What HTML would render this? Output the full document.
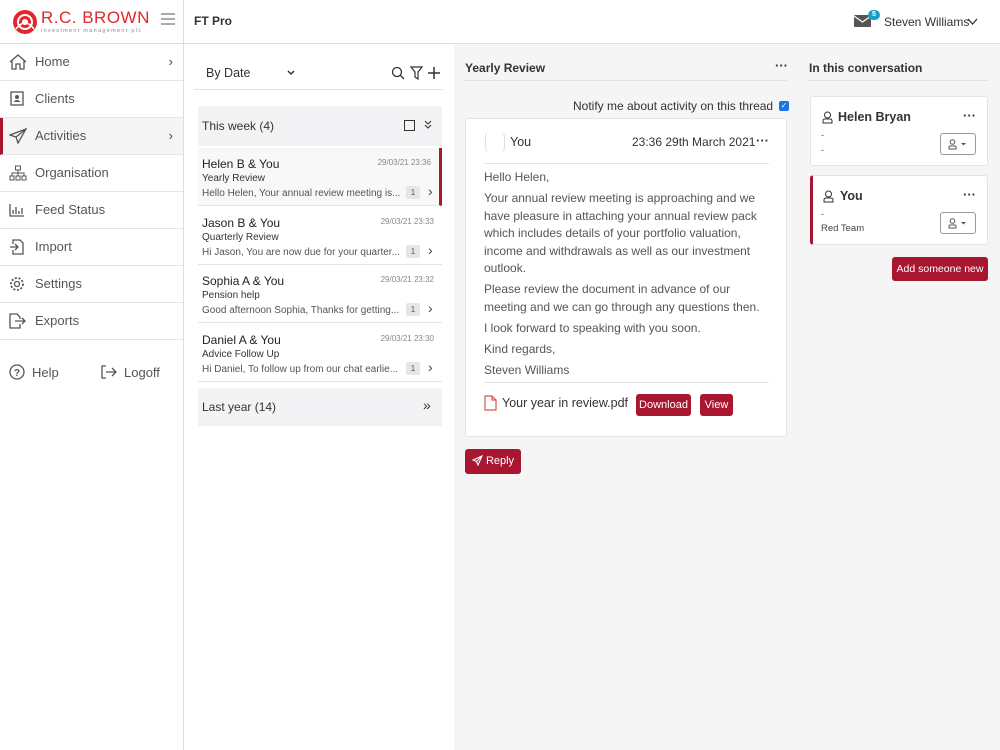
<!DOCTYPE html>
<html><head><style>
*{box-sizing:border-box;margin:0;padding:0}
body{width:1000px;height:750px;overflow:hidden;font-family:"Liberation Sans",sans-serif;color:#333;background:#fff;position:relative;font-size:13px}
.abs{position:absolute}
.hdr{left:0;top:0;width:1000px;height:44px;border-bottom:1px solid #ddd;background:#fff}
.side{left:0;top:44px;width:184px;height:706px;border-right:1px solid #ddd;background:#fff}
.nav{position:absolute;left:0;width:183px;height:37px;border-bottom:1px solid #e5e5e5;font-size:13px;color:#555;line-height:36px;padding-left:35px}
.nav svg{position:absolute;left:9px;top:10px}
.chev{position:absolute;right:10px;top:0;font-size:13px;color:#444}
.right{left:454px;top:44px;width:546px;height:706px;background:#f5f5f5}
.item{position:absolute;left:198px;width:244px;background:#fff;border-bottom:1px solid #e5e5e5}
.item b{position:absolute;left:4px;top:9px;font-size:12px;font-weight:normal;color:#222}
.item .d{position:absolute;right:8px;top:10px;font-size:8px;color:#888}
.item .s{position:absolute;left:4px;top:25px;font-size:10px;color:#333}
.item .p{position:absolute;left:4px;top:40px;font-size:10px;color:#555}
.item .n{position:absolute;left:208px;top:38px;width:14px;height:13px;background:#e4e6ea;border-radius:2px;font-size:8px;text-align:center;line-height:13px;color:#555}
.item .a{position:absolute;left:230px;top:35px;font-size:14px;color:#444}
.btn{position:absolute;background:#a8162f;color:#fff;border-radius:3px;font-size:11px;text-align:center}
.card{position:absolute;background:#fff;border:1px solid #e4e4e4;border-radius:3px}
.body p{font-size:12px;color:#555;line-height:17.5px;margin-bottom:3.5px}
.dots{position:absolute;font-size:13px;font-weight:bold;color:#333}
.pbtn{position:absolute;width:36px;height:22px;border:1px solid #999;border-radius:3px;background:#fff}
</style></head><body>
<div class="abs hdr">
  <svg class="abs" style="left:12px;top:9px" width="26" height="26" viewBox="0 0 26 26"><circle cx="13" cy="13" r="12" fill="#e3262b"/><circle cx="13" cy="13" r="7" fill="none" stroke="#fff" stroke-width="2"/><circle cx="13" cy="13" r="3" fill="#fff"/><path d="M4 20 Q13 8 22 20" stroke="#fff" stroke-width="1.5" fill="none"/></svg>
  <div class="abs" style="left:41px;top:8px;font-size:17px;color:#e3262b;letter-spacing:0.5px">R.C. BROWN</div>
  <div class="abs" style="left:41px;top:28px;font-size:5.5px;color:#888;letter-spacing:1.3px">investment management plc</div>
  <div class="abs" style="left:161px;top:13px;width:14px;height:2px;background:#aaa;box-shadow:0 5px 0 #aaa,0 10px 0 #aaa"></div>
  <div class="abs" style="left:183px;top:0;width:1px;height:44px;background:#ddd"></div>
  <div class="abs" style="left:194px;top:14px;font-size:12px;font-weight:bold;color:#333">FT Pro</div>
  <svg class="abs" style="left:854px;top:15px" width="17" height="12" viewBox="0 0 17 12"><rect width="17" height="12" rx="1" fill="#555"/><path d="M0 1 L8.5 7 L17 1" stroke="#fff" stroke-width="1.2" fill="none"/></svg>
  <div class="abs" style="left:868px;top:10px;width:12px;height:10px;border-radius:5px;background:#1ba0c4;color:#fff;font-size:7px;text-align:center;line-height:10px;font-weight:bold">5</div>
  <div class="abs" style="left:884px;top:15px;font-size:12px;color:#333">Steven Williams</div>
  <svg class="abs" style="left:967px;top:18px" width="11" height="7"><path d="M1 1 L5.5 6 L10 1" stroke="#333" stroke-width="1.3" fill="none"/></svg>
</div>
<div class="abs side">
  <div class="nav" style="top:0">Home<span class="chev">›</span><svg width="18" height="16" viewBox="0 0 18 16"><path d="M1 8 L9 1 L17 8 M3 6 V15 H7 V10 H11 V15 H15 V6" stroke="#555" stroke-width="1.3" fill="none"/></svg></div>
  <div class="nav" style="top:37px">Clients<svg width="16" height="16" viewBox="0 0 16 16"><rect x="2" y="1" width="12" height="13" stroke="#555" stroke-width="1.3" fill="none"/><circle cx="8" cy="6" r="2" fill="#555"/><path d="M4.5 11 Q8 7 11.5 11Z" fill="#555"/></svg></div>
  <div class="nav" style="top:74px;background:#f5f5f5;border-left:3px solid #a8162f;padding-left:32px">Activities<span class="chev">›</span><svg style="left:6px" width="18" height="16" viewBox="0 0 18 16"><path d="M17 1 L1 7 L7 9 L9 15 Z M7 9 L17 1" stroke="#555" stroke-width="1.3" fill="none"/></svg></div>
  <div class="nav" style="top:111px">Organisation<svg width="18" height="16" viewBox="0 0 18 16"><rect x="6.5" y="1" width="5" height="4" stroke="#555" fill="none"/><path d="M9 5V8 M3 11V8H15V11 M9 8V11" stroke="#555" fill="none"/><rect x="1" y="11" width="4" height="4" stroke="#555" fill="none"/><rect x="7" y="11" width="4" height="4" stroke="#555" fill="none"/><rect x="13" y="11" width="4" height="4" stroke="#555" fill="none"/></svg></div>
  <div class="nav" style="top:148px">Feed Status<svg width="16" height="16" viewBox="0 0 16 16"><path d="M1 2V14H15 M4 12V8 M7 12V5 M10 12V9 M13 12V6" stroke="#555" stroke-width="1.3" fill="none"/></svg></div>
  <div class="nav" style="top:185px">Import<svg width="16" height="16" viewBox="0 0 16 16"><path d="M4 5V1H11L14 4V15H4V11 M1 8H9 M6 5L9 8L6 11" stroke="#555" stroke-width="1.3" fill="none"/></svg></div>
  <div class="nav" style="top:222px">Settings<svg width="16" height="16" viewBox="0 0 16 16"><circle cx="8" cy="8" r="2.5" stroke="#555" stroke-width="1.3" fill="none"/><circle cx="8" cy="8" r="6" stroke="#555" stroke-width="1.8" stroke-dasharray="2 1.7" fill="none"/></svg></div>
  <div class="nav" style="top:259px">Exports<svg width="18" height="16" viewBox="0 0 18 16"><path d="M11 6V4L8 1H1V15H11V11 M6 8H16 M13 5L16 8L13 11" stroke="#555" stroke-width="1.3" fill="none"/></svg></div>
  <svg class="abs" style="left:9px;top:320px" width="16" height="16" viewBox="0 0 16 16"><circle cx="8" cy="8" r="7" stroke="#555" stroke-width="1.3" fill="none"/><text x="8" y="12" font-size="10" text-anchor="middle" fill="#555" font-family="Liberation Sans" font-weight="bold">?</text></svg>
  <div class="abs" style="left:32px;top:321px;font-size:13px;color:#555">Help</div>
  <svg class="abs" style="left:100px;top:320px" width="18" height="16" viewBox="0 0 18 16"><path d="M6 2H2V14H6 M6 8H16 M12 4L16 8L12 12" stroke="#555" stroke-width="1.3" fill="none"/></svg>
  <div class="abs" style="left:124px;top:321px;font-size:13px;color:#555">Logoff</div>
</div>
<div class="abs" style="left:206px;top:66px;font-size:12.5px;color:#333">By Date</div>
<svg class="abs" style="left:287px;top:70px" width="8" height="6"><path d="M1 1L4 4L7 1" stroke="#333" stroke-width="1.5" fill="none"/></svg>
<svg class="abs" style="left:391px;top:66px" width="50" height="14" viewBox="0 0 50 14"><circle cx="6" cy="6" r="4.5" stroke="#333" stroke-width="1.3" fill="none"/><path d="M9.5 9.5L13 13" stroke="#333" stroke-width="1.3"/><path d="M20 1H31L27 6V13L24 11V6Z" stroke="#333" stroke-width="1.2" fill="none"/><path d="M43 1V13 M37 7H49" stroke="#333" stroke-width="1.5"/></svg>
<div class="abs" style="left:194px;top:89px;width:249px;height:1px;background:#dde3ea"></div>
<div class="abs" style="left:198px;top:106px;width:244px;height:40px;background:#f3f3f5"></div>
<div class="abs" style="left:202px;top:119px;font-size:12px;color:#333">This week (4)</div>
<div class="abs" style="left:404px;top:120px;width:11px;height:11px;border:1.3px solid #333"></div>
<svg class="abs" style="left:424px;top:120px" width="8" height="10"><path d="M1 1L4 4L7 1M1 5L4 8L7 5" stroke="#333" stroke-width="1.1" fill="none"/></svg>
<div class="item" style="top:148px;height:58px;background:#f8f8f8;border-right:3px solid #a8162f"><b>Helen B &amp; You</b><span class="d">29/03/21 23:36</span><span class="s">Yearly Review</span><span class="p">Hello Helen, Your annual review meeting is...</span><span class="n">1</span><span class="a">›</span></div>
<div class="item" style="top:207px;height:58px"><b>Jason B &amp; You</b><span class="d">29/03/21 23:33</span><span class="s">Quarterly Review</span><span class="p">Hi Jason, You are now due for your quarter...</span><span class="n">1</span><span class="a">›</span></div>
<div class="item" style="top:265px;height:58px"><b>Sophia A &amp; You</b><span class="d">29/03/21 23:32</span><span class="s">Pension help</span><span class="p">Good afternoon Sophia, Thanks for getting...</span><span class="n">1</span><span class="a">›</span></div>
<div class="item" style="top:324px;height:58px"><b>Daniel A &amp; You</b><span class="d">29/03/21 23:30</span><span class="s">Advice Follow Up</span><span class="p">Hi Daniel, To follow up from our chat earlie...</span><span class="n">1</span><span class="a">›</span></div>
<div class="abs" style="left:198px;top:388px;width:244px;height:38px;background:#f3f3f5"></div>
<div class="abs" style="left:202px;top:400px;font-size:12px;color:#333">Last year (14)</div>
<div class="abs" style="left:423px;top:397px;font-size:14px;color:#333">»</div>
<div class="abs right"></div>
<div class="abs" style="left:465px;top:61px;font-size:12px;font-weight:bold;color:#333">Yearly Review</div>
<div class="dots" style="left:775px;top:58px">···</div>
<div class="abs" style="left:465px;top:80px;width:322px;height:1px;background:#dde3ea"></div>
<div class="abs" style="left:573px;top:99px;font-size:12px;color:#333">Notify me about activity on this thread</div>
<div class="abs" style="left:779px;top:101px;width:10px;height:10px;background:#1a73e8;border-radius:2px;color:#fff;font-size:8px;line-height:10px;text-align:center">✓</div>
<div class="card" style="left:465px;top:118px;width:322px;height:319px">
  <div class="abs" style="left:19px;top:12px;width:20px;height:22px;border-left:1px solid #ddd;border-right:1px solid #ddd;border-radius:6px"></div>
  <div class="abs" style="left:44px;top:16px;font-size:12.5px;color:#333">You</div>
  <div class="abs" style="left:166px;top:16px;font-size:12px;color:#333">23:36 29th March 2021</div>
  <div class="dots" style="left:290px;top:14px">···</div>
  <div class="abs" style="left:18px;top:44px;width:285px;height:1px;background:#dde3ea"></div>
  <div class="abs body" style="left:18px;top:50px;width:290px">
    <p>Hello Helen,</p>
    <p>Your annual review meeting is approaching and we have pleasure in attaching your annual review pack which includes details of your portfolio valuation, income and withdrawals as well as our investment outlook.</p>
    <p>Please review the document in advance of our meeting and we can go through any questions then.</p>
    <p>I look forward to speaking with you soon.</p>
    <p>Kind regards,</p>
    <p>Steven Williams</p>
  </div>
  <div class="abs" style="left:18px;top:263px;width:285px;height:1px;background:#dde3ea"></div>
  <svg class="abs" style="left:18px;top:276px" width="13" height="16" viewBox="0 0 13 16"><path d="M1 1H8L12 5V15H1Z M8 1V5H12" stroke="#d9534f" stroke-width="1.2" fill="none"/></svg>
  <div class="abs" style="left:36px;top:277px;font-size:12.5px;color:#333">Your year in review.pdf</div>
  <div class="btn" style="left:170px;top:275px;width:55px;height:22px;line-height:22px">Download</div>
  <div class="btn" style="left:234px;top:275px;width:33px;height:22px;line-height:22px">View</div>
</div>
<div class="btn" style="left:465px;top:449px;width:56px;height:25px;line-height:25px;font-size:11px"><svg style="vertical-align:-2px;margin-right:3px" width="11" height="11" viewBox="0 0 11 11"><path d="M10 1L1 5L4.5 6.5L6 10Z M4.5 6.5L10 1" stroke="#fff" stroke-width="1.1" fill="none"/></svg>Reply</div>
<div class="abs" style="left:809px;top:61px;font-size:12px;font-weight:bold;color:#333">In this conversation</div>
<div class="abs" style="left:809px;top:80px;width:180px;height:1px;background:#dde3ea"></div>
<div class="card" style="left:810px;top:96px;width:178px;height:70px">
  <svg class="abs" style="left:11px;top:14px" width="11" height="13" viewBox="0 0 11 13"><circle cx="5.5" cy="4" r="3" stroke="#333" fill="none"/><path d="M1 12V10Q1 8 3 8H8Q10 8 10 10V12Z" stroke="#333" fill="none"/></svg>
  <div class="abs" style="left:27px;top:13px;font-size:12.5px;font-weight:bold;color:#333">Helen Bryan</div>
  <div class="dots" style="left:152px;top:11px">···</div>
  <div class="abs" style="left:10px;top:33px;font-size:9px;color:#555">-</div>
  <div class="abs" style="left:10px;top:48px;font-size:9px;color:#555">-</div>
  <div class="pbtn" style="left:129px;top:36px"><svg class="abs" style="left:7px;top:5px" width="20" height="11" viewBox="0 0 20 11"><circle cx="4.5" cy="3" r="2.3" stroke="#555" fill="none"/><path d="M1 10V8Q1 7 2 7H7Q8 7 8 8V10Z" stroke="#555" fill="none"/><path d="M13 4L15.5 6.5L18 4Z" fill="#555"/></svg></div>
</div>
<div class="card" style="left:810px;top:175px;width:178px;height:70px;border-left:3px solid #a8162f">
  <svg class="abs" style="left:10px;top:14px" width="11" height="13" viewBox="0 0 11 13"><circle cx="5.5" cy="4" r="3" stroke="#333" fill="none"/><path d="M1 12V10Q1 8 3 8H8Q10 8 10 10V12Z" stroke="#333" fill="none"/></svg>
  <div class="abs" style="left:27px;top:13px;font-size:12.5px;font-weight:bold;color:#333">You</div>
  <div class="dots" style="left:150px;top:11px">···</div>
  <div class="abs" style="left:8px;top:33px;font-size:9px;color:#555">-</div>
  <div class="abs" style="left:8px;top:47px;font-size:9.5px;color:#444">Red Team</div>
  <div class="pbtn" style="left:127px;top:36px"><svg class="abs" style="left:7px;top:5px" width="20" height="11" viewBox="0 0 20 11"><circle cx="4.5" cy="3" r="2.3" stroke="#555" fill="none"/><path d="M1 10V8Q1 7 2 7H7Q8 7 8 8V10Z" stroke="#555" fill="none"/><path d="M13 4L15.5 6.5L18 4Z" fill="#555"/></svg></div>
</div>
<div class="btn" style="left:892px;top:257px;width:96px;height:24px;line-height:24px;font-size:10.5px">Add someone new</div>
</body></html>
